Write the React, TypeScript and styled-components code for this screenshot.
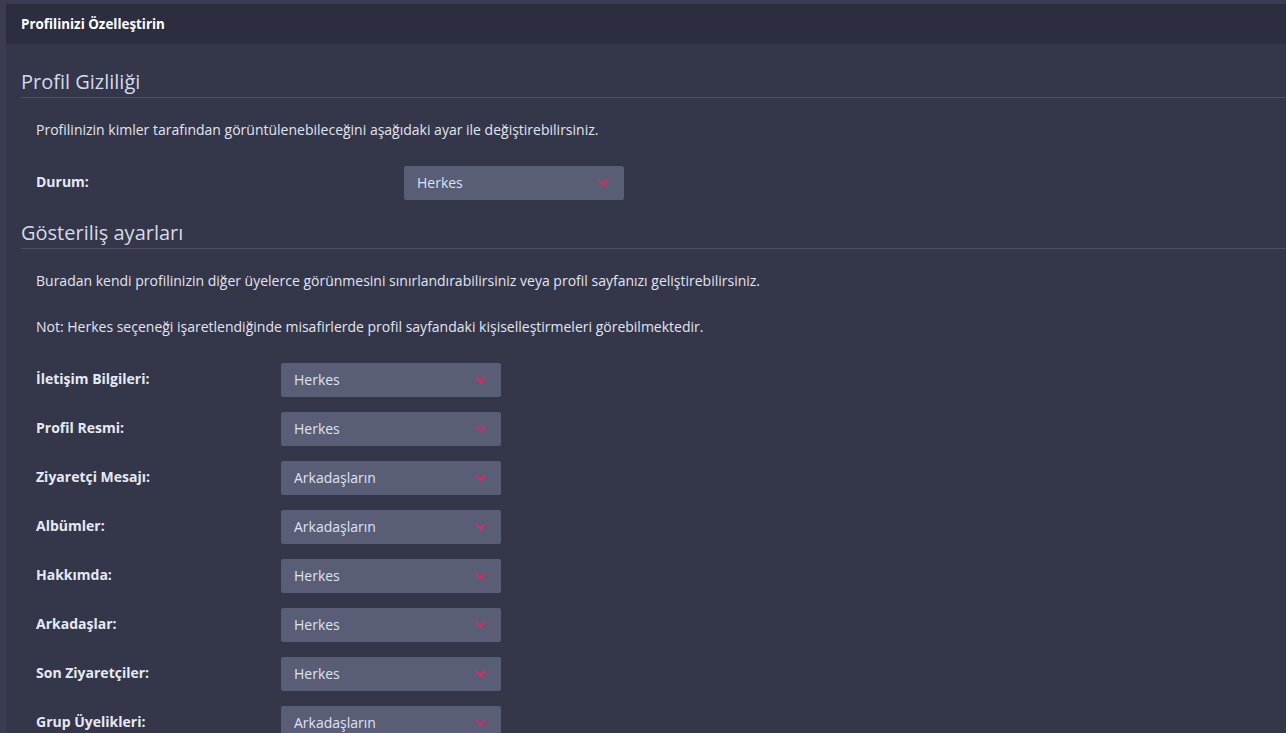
import React from 'react';
import styled, { createGlobalStyle } from 'styled-components';

const GlobalStyle = createGlobalStyle`
    html, body {
        margin: 0;
        padding: 0;
        background: #3a3c51;
    }
    body {
        font-family: "Open Sans", "Liberation Sans", sans-serif;
        color: #e2e5f0;
    }
`;

const Page = styled.div`
    padding: 4px 0 0 6px;
    min-height: 733px;
    box-sizing: border-box;
`;

const Panel = styled.div`
    background: #343649;
    min-height: 729px;
`;

const PanelHeader = styled.div`
    height: 40px;
    display: flex;
    align-items: center;
    padding-left: 15px;
    background: #2c2e40;
    color: #ffffff;
    font-size: 13.4px;
    font-weight: 700;
`;

const Content = styled.div`
    padding: 0 0 20px 15px;
`;

const SectionTitle = styled.h2<{ $top?: number }>`
    margin: ${p => p.$top ?? 24}px 0 0;
    padding-bottom: 2px;
    font-size: 20px;
    line-height: 27px;
    font-weight: 400;
    color: #d6dae9;
    border-bottom: 1px solid #4c4f65;
`;

const Note = styled.p<{ $top?: number }>`
    margin: ${p => p.$top ?? 23}px 0 0 15px;
    font-size: 14px;
    line-height: 18px;
    color: #e2e5f0;
`;

const Form = styled.div<{ $labelWidth: number }>`
    display: grid;
    grid-template-columns: ${p => p.$labelWidth}px 220px;
    row-gap: 15px;
    align-items: center;
    margin: 27px 0 0 15px;
`;

const FieldLabel = styled.label`
    font-size: 14px;
    font-weight: 700;
    color: #e6e9f3;
    margin-top: -3px;
`;

const SelectBox = styled.div`
    height: 34px;
    display: flex;
    align-items: center;
    justify-content: space-between;
    padding: 0 15px 0 13px;
    box-sizing: border-box;
    background: #5a5d76;
    border-radius: 2px;
    font-size: 14px;
    line-height: 18px;
    color: #dee3f4;
    cursor: pointer;
`;

const Chevron = () => (
    <svg width="11" height="7" viewBox="0 0 11 7" style={{ marginTop: -2 }}>
        <path d="M1 1.2l4.5 4.3 4.5-4.3" fill="none" stroke="#f0215e" strokeWidth="1.7" />
    </svg>
);

function Select({ value }: { value: string }) {
    return (
        <SelectBox>
            <span>{value}</span>
            <Chevron />
        </SelectBox>
    );
}

const visibility = [
    ['İletişim Bilgileri:', 'Herkes'],
    ['Profil Resmi:', 'Herkes'],
    ['Ziyaretçi Mesajı:', 'Arkadaşların'],
    ['Albümler:', 'Arkadaşların'],
    ['Hakkımda:', 'Herkes'],
    ['Arkadaşlar:', 'Herkes'],
    ['Son Ziyaretçiler:', 'Herkes'],
    ['Grup Üyelikleri:', 'Arkadaşların'],
];

export default function App() {
    return (
        <Page>
            <GlobalStyle />
            <Panel>
                <PanelHeader>Profilinizi Özelleştirin</PanelHeader>
                <Content>
                    <SectionTitle>Profil Gizliliği</SectionTitle>
                    <Note>Profilinizin kimler tarafından görüntülenebileceğini aşağıdaki ayar ile değiştirebilirsiniz.</Note>
                    <Form $labelWidth={368}>
                        <FieldLabel>Durum:</FieldLabel>
                        <Select value="Herkes" />
                    </Form>

                    <SectionTitle $top={19}>Gösteriliş ayarları</SectionTitle>
                    <Note>Buradan kendi profilinizin diğer üyelerce görünmesini sınırlandırabilirsiniz veya profil sayfanızı geliştirebilirsiniz.</Note>
                    <Note $top={28}>Not: Herkes seçeneği işaretlendiğinde misafirlerde profil sayfandaki kişiselleştirmeleri görebilmektedir.</Note>
                    <Form $labelWidth={245}>
                        {visibility.map(([label, value]) => (
                            <React.Fragment key={label}>
                                <FieldLabel>{label}</FieldLabel>
                                <Select value={value} />
                            </React.Fragment>
                        ))}
                    </Form>
                </Content>
            </Panel>
        </Page>
    );
}
